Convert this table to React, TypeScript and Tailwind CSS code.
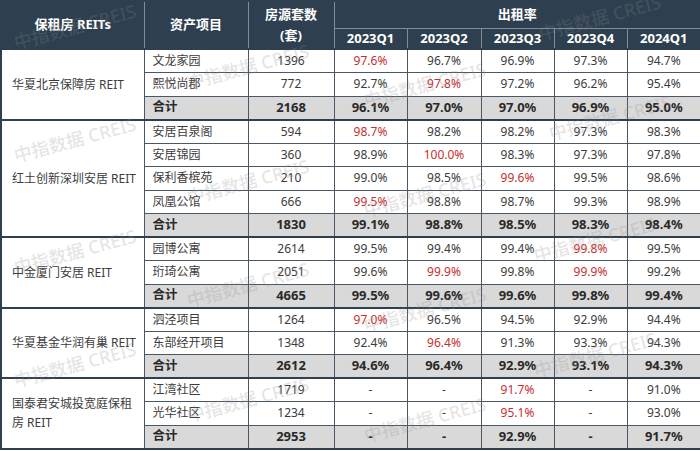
import React from "react";

type Group = {
  name: React.ReactNode;
  rows: [string, string, string[]][];
  total: [string, string[]];
};

const groups: Group[] = [
  {
    name: "华夏北京保障房 REIT",
    rows: [
      ["文龙家园", "1396", ["97.6%r", "96.7%", "96.9%", "97.3%", "94.7%"]],
      ["熙悦尚郡", "772", ["92.7%", "97.8%r", "97.2%", "96.2%", "95.4%"]],
    ],
    total: ["2168", ["96.1%", "97.0%", "97.0%", "96.9%", "95.0%"]],
  },
  {
    name: "红土创新深圳安居 REIT",
    rows: [
      ["安居百泉阁", "594", ["98.7%r", "98.2%", "98.2%", "97.3%", "98.3%"]],
      ["安居锦园", "360", ["98.9%", "100.0%r", "98.3%", "97.3%", "97.8%"]],
      ["保利香槟苑", "210", ["99.0%", "98.5%", "99.6%r", "99.5%", "98.6%"]],
      ["凤凰公馆", "666", ["99.5%r", "98.8%", "98.7%", "99.3%", "98.9%"]],
    ],
    total: ["1830", ["99.1%", "98.8%", "98.5%", "98.3%", "98.4%"]],
  },
  {
    name: "中金厦门安居 REIT",
    rows: [
      ["园博公寓", "2614", ["99.5%", "99.4%", "99.4%", "99.8%r", "99.5%"]],
      ["珩琦公寓", "2051", ["99.6%", "99.9%r", "99.8%", "99.9%r", "99.2%"]],
    ],
    total: ["4665", ["99.5%", "99.6%", "99.6%", "99.8%", "99.4%"]],
  },
  {
    name: "华夏基金华润有巢 REIT",
    rows: [
      ["泗泾项目", "1264", ["97.0%r", "96.5%", "94.5%", "92.9%", "94.4%"]],
      ["东部经开项目", "1348", ["92.4%", "96.4%r", "91.3%", "93.3%", "94.3%"]],
    ],
    total: ["2612", ["94.6%", "96.4%", "92.9%", "93.1%", "94.3%"]],
  },
  {
    name: (
      <>
        国泰君安城投宽庭保租
        <br />
        房 REIT
      </>
    ),
    rows: [
      ["江湾社区", "1719", ["-", "-", "91.7%r", "-", "91.0%"]],
      ["光华社区", "1234", ["-", "-", "95.1%r", "-", "93.0%"]],
    ],
    total: ["2953", ["-", "-", "92.9%", "-", "91.7%"]],
  },
];

const quarters = ["2023Q1", "2023Q2", "2023Q3", "2023Q4", "2024Q1"];

const marks: [number, number][] = [
  [75, 27], [75, 140], [75, 252], [75, 365],
  [248, 67], [248, 182], [248, 285], [248, 400],
  [425, 85], [425, 195], [425, 310], [425, 420],
  [600, 18], [610, 118], [595, 240], [595, 355],
];

const cellB = "border border-[#4a5866]";
const hdrB = "border border-[#7f8d9a]";

export default function App() {
  return (
    <div
      className="relative w-[700px] h-[451px] bg-white overflow-hidden"
      style={{ fontFamily: '"Noto Sans", "Noto Sans CJK SC", sans-serif' }}
    >
      <table className="w-[700px] border-collapse table-fixed border-2 border-[#2e3f4f] text-[12px] text-[#3c3c3c]">
        <colgroup>
          <col className="w-[143px]" />
          <col className="w-[104px]" />
          <col className="w-[86px]" />
          <col className="w-[73px]" />
          <col className="w-[74px]" />
          <col className="w-[73px]" />
          <col className="w-[73px]" />
          <col className="w-[74px]" />
        </colgroup>
        <thead>
          <tr className="h-[27px] bg-[#2e3f4f] text-white font-bold text-[13px]">
            <th rowSpan={2} className={`${hdrB} border-l-[#2e3f4f] border-t-[#2e3f4f] font-bold`}>保租房 REITs</th>
            <th rowSpan={2} className={`${hdrB} border-t-[#2e3f4f] font-bold`}>资产项目</th>
            <th rowSpan={2} className={`${hdrB} border-t-[#2e3f4f] font-bold leading-[21px]`}>
              房源套数
              <br />
              (套)
            </th>
            <th colSpan={5} className={`${hdrB} border-t-[#2e3f4f] border-r-[#2e3f4f] font-bold`}>出租率</th>
          </tr>
          <tr className="h-[21px] bg-[#2e3f4f] text-white text-[13px]">
            {quarters.map((q, i) => (
              <th key={q} className={`${hdrB} font-bold ${i === 4 ? "border-r-[#2e3f4f]" : ""} border-b-[#2e3f4f]`}>
                {q}
              </th>
            ))}
          </tr>
        </thead>
        <tbody>
          {groups.map((g, gi) => (
            <React.Fragment key={gi}>
              {g.rows.map((r, ri) => (
                <tr key={ri} className={`h-[23.5px] ${ri === 0 ? "border-t-2 border-t-[#2e3f4f]" : ""}`}>
                  {ri === 0 && (
                    <td
                      rowSpan={g.rows.length + 1}
                      className={`${cellB} border-t-2 border-t-[#2e3f4f] border-b-2 border-b-[#2e3f4f] pl-[10px] pr-0 leading-[19px] whitespace-nowrap text-[12px]`}
                    >
                      {g.name}
                    </td>
                  )}
                  <td className={`${cellB} pl-[8px] text-[12px]`}>{r[0]}</td>
                  <td className={`${cellB} text-center`}>{r[1]}</td>
                  {r[2].map((v, vi) => {
                    const red = v.endsWith("r");
                    return (
                      <td key={vi} className={`${cellB} text-center ${red ? "text-[#c62f2f]" : ""}`}>
                        {red ? v.slice(0, -1) : v}
                      </td>
                    );
                  })}
                </tr>
              ))}
              <tr className="h-[23.5px] bg-[#d9d9d9] font-bold text-[13px] text-[#2a2a2a] border-b-2 border-b-[#2e3f4f]">
                <td className={`${cellB} border-b-2 border-b-[#2e3f4f] pl-[8px] text-[12.5px]`}>合计</td>
                <td className={`${cellB} border-b-2 border-b-[#2e3f4f] text-center`}>{g.total[0]}</td>
                {g.total[1].map((v, vi) => (
                  <td key={vi} className={`${cellB} border-b-2 border-b-[#2e3f4f] text-center`}>
                    {v}
                  </td>
                ))}
              </tr>
            </React.Fragment>
          ))}
        </tbody>
      </table>
      {marks.map(([x, y], i) => (
        <div
          key={i}
          className="absolute pointer-events-none whitespace-nowrap text-[18px] font-medium text-[rgba(140,140,140,0.24)]"
          style={{ left: x, top: y, transform: "translate(-50%, -50%) rotate(-15deg)" }}
        >
          中指数据 CREIS
        </div>
      ))}
    </div>
  );
}
